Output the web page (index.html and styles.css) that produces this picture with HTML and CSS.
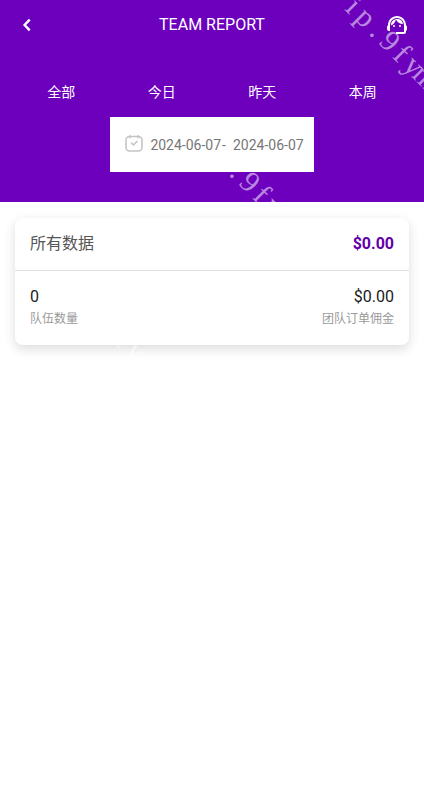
FILE: index.html
```html
<!DOCTYPE html>
<html lang="zh">
<head>
<meta charset="utf-8">
<meta name="viewport" content="width=device-width, initial-scale=1">
<title>TEAM REPORT</title>
<link rel="stylesheet" href="styles.css">
</head>
<body>
<header class="hero">
  <div class="bar">
    <button class="icon-button" type="button" aria-label="Back">
      <svg width="24" height="24" viewBox="0 0 24 24" fill="none" stroke="currentColor" stroke-width="2.4"><path d="M14.7 6.7 9.6 12l5.1 5.3"/></svg>
    </button>
    <h1 class="title">TEAM REPORT</h1>
    <button class="icon-button" type="button" aria-label="Support">
      <svg width="24" height="24" viewBox="0 0 24 24" fill="currentColor"><path d="M21 12.22C21 6.73 16.74 3 12 3c-4.69 0-9 3.65-9 9.28-.6.34-1 .98-1 1.72v2c0 1.1.9 2 2 2h1v-6.100a7 7 0 0 1 14 0V19h-8v2h8c1.1 0 2-.9 2-2v-1.220c.59-.31 1-.92 1-1.640v-2.300c0-.7-.41-1.310-1-1.620z"/><circle cx="9" cy="13" r="1"/><circle cx="15" cy="13" r="1"/><path d="M18 11.030A6.040 6.040 0 0 0 12.050 6c-3.030 0-6.290 2.510-6.030 6.450a8.075 8.075 0 0 0 4.860-5.890c1.310 2.630 4 4.440 7.120 4.470z"/></svg>
    </button>
  </div>
  <nav class="tabs">
    <button class="tab" type="button">全部</button>
    <button class="tab" type="button">今日</button>
    <button class="tab" type="button">昨天</button>
    <button class="tab" type="button">本周</button>
  </nav>
  <button class="dates" type="button">
    <svg class="calendar" width="20" height="20" viewBox="0 0 20 20" fill="none" stroke="currentColor" stroke-width="1.600" stroke-linecap="round" stroke-linejoin="round"><rect x="2" y="1.500" width="16" height="14.500" rx="3.500"/><path d="M6 .8v2M14 .8v2M7.500 8l2 2 3.500-3.500"/></svg>
    <span>2024-06-07</span><span class="dash">-</span><span>2024-06-07</span>
  </button>
</header>
<main class="card">
  <div class="row summary">
    <h2 class="heading">所有数据</h2>
    <strong class="total">$0.00</strong>
  </div>
  <div class="row stats">
    <div><div class="value">0</div><div class="label">队伍数量</div></div>
    <div class="end"><div class="value">$0.00</div><div class="label">团队订单佣金</div></div>
  </div>
</main>
<div class="watermarks" aria-hidden="true">
  <div class="mark mark-top"><span>i</span><span>p</span><span>.</span><span>9</span><span>f</span><span>y</span><span>m</span></div>
  <div class="mark mark-middle"><span>.</span><span>9</span><span>f</span><span>y</span></div>
  <div class="mark mark-bottom"><span>f</span><span>y</span><span>m</span></div>
</div>
</body>
</html>
```

FILE: styles.css
```css
* { box-sizing: border-box; }

body {
  position: relative;
  min-height: 100vh;
  margin: 0;
  overflow-x: hidden;
  background: #fff;
  color: #212121;
  font-family: Roboto, "Noto Sans CJK SC", sans-serif;
  font-size: 16px;
  line-height: 24px;
}

button {
  padding: 0;
  border: 0;
  background: none;
  color: inherit;
  font: inherit;
}

.hero {
  display: flex;
  flex-direction: column;
  align-items: center;
  padding-bottom: 30px;
  background: #6c00bd;
  color: #fff;
}

.bar {
  display: flex;
  align-items: center;
  justify-content: space-between;
  width: 100%;
  height: 49px;
  padding: 0 15px;
}

.icon-button { width: 24px; height: 24px; }
.icon-button svg { display: block; }

.title {
  margin: 0;
  font-size: 16px;
  font-weight: 400;
  line-height: 25px;
}

.tabs {
  display: grid;
  grid-template-columns: repeat(4, 1fr);
  width: 100%;
  margin-top: 31px;
  padding: 0 11px;
}

.tab {
  font-size: 14px;
  line-height: 24px;
}

.dates {
  display: flex;
  align-items: center;
  height: 55px;
  margin-top: 13px;
  padding: 0 10px 0 14px;
  background: #fff;
  color: #777;
  font-size: 14px;
}

.calendar {
  margin-right: 6px;
  color: #c4c4c4;
}

.dash { margin: 0 7px 0 1px; }

.card {
  margin: 16px 15px;
  border-radius: 8px;
  background: #fff;
  box-shadow: 0 4px 12px rgba(0, 0, 0, 0.14);
}

.row {
  display: flex;
  justify-content: space-between;
  padding: 0 15px;
}

.summary {
  align-items: center;
  height: 53px;
  border-bottom: 1px solid #e0e0e0;
}

.heading {
  margin: 0;
  color: #555;
  font-size: 16px;
  font-weight: 400;
}

.total { color: #6200a8; font-weight: 700; }

.stats { padding-top: 14px; padding-bottom: 16px; }

.end { text-align: right; }

.label {
  color: #999;
  font-size: 12px;
  line-height: 20px;
}

.watermarks {
  position: absolute;
  inset: 0;
  overflow: hidden;
  pointer-events: none;
}

.mark {
  position: absolute;
  display: grid;
  grid-auto-columns: 17px;
  grid-auto-flow: column;
  justify-items: center;
  color: rgba(255, 255, 255, 0.55);
  font-family: "Liberation Serif", serif;
  font-size: 30px;
  line-height: 30px;
  transform: rotate(45deg);
  transform-origin: 0 50%;
}

.mark-top { left: 348px; top: -16px; }
.mark-middle { left: 232px; top: 149px; }
.mark-bottom { left: 118px; top: 318px; }
```
